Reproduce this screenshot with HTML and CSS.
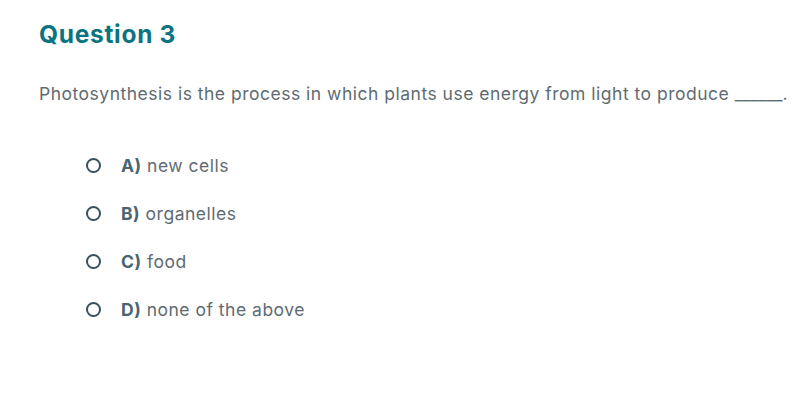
FILE: index.html
```html
<!DOCTYPE html>
<html>
<head>
<meta charset="utf-8">
<link rel="stylesheet" href="styles.css">
</head>
<body>
<div class="quiz">
  <h2 class="title">Question 3</h2>
  <p class="prompt">Photosynthesis is the process in which plants use energy from light to produce <span class="blank">______</span>.</p>
  <ul class="options">
    <li class="option"><span class="radio"></span><span class="label"><b>A)</b> new cells</span></li>
    <li class="option"><span class="radio"></span><span class="label"><b>B)</b> organelles</span></li>
    <li class="option"><span class="radio"></span><span class="label"><b>C)</b> food</span></li>
    <li class="option"><span class="radio"></span><span class="label"><b>D)</b> none of the above</span></li>
  </ul>
</div>
</body>
</html>
```
FILE: styles.css
```css
html, body { margin: 0; padding: 0; background: #fff; }
body { font-family: Inter, "Open Sans", sans-serif; font-variant-ligatures: none; }
.quiz { padding: 18px 0 0 39px; }
.title { margin: 0; font-size: 24.5px; font-weight: 700; color: #0b7480; line-height: 32px; letter-spacing: 0.7px; }
.prompt { margin: 31px 0 0; font-size: 17.5px; color: #5f6b72; line-height: 26px; white-space: nowrap; letter-spacing: 0.5px; }
.blank { letter-spacing: 0; }
.options { list-style: none; margin: 45px 0 0; padding: 0 0 0 47px; display: flex; flex-direction: column; gap: 22px; }
.option { display: flex; align-items: center; height: 26px; }
.radio { width: 11px; height: 11px; border: 2.5px solid #34535e; border-radius: 50%; margin-right: 20px; flex: none; }
.label { font-size: 17.5px; color: #5f6b72; letter-spacing: 0.5px; }
.label b { color: #4a6472; font-weight: 700; }
```
